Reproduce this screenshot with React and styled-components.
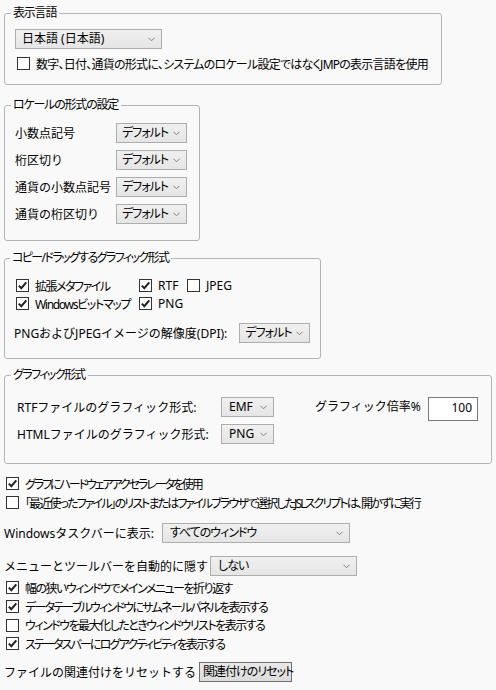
import React from "react";
import styled, { createGlobalStyle } from "styled-components";

const GlobalStyle = createGlobalStyle`
  html, body {
    margin: 0;
    padding: 0;
    background: #f9f9f9;
  }
  body {
    font-family: "Noto Sans", "Noto Sans CJK JP", sans-serif;
    font-size: 12px;
    color: #000;
  }
`;

// proportional (Meiryo UI like) text used by legends, checkboxes, combos, buttons
const Prop = styled.span`
  font-feature-settings: "palt";
  letter-spacing: ${(p) => (p.$ls != null ? p.$ls : -1.2)}px;
`;

const Page = styled.div`
  width: 496px;
  height: 690px;
  padding: 5px 0 0 4px;
  box-sizing: border-box;
  overflow: hidden;
`;

const Group = styled.fieldset`
  width: ${(p) => p.$w}px;
  box-sizing: border-box;
  margin: ${(p) => p.$mt || 0}px 0 0 0;
  padding: ${(p) => p.$pt}px 0 ${(p) => p.$pb}px ${(p) => p.$pl || 10}px;
  border: 1px solid #b4b4b4;
  border-radius: 3px;
  min-width: 0;
`;

const Legend = styled.legend`
  margin-left: -4px;
  padding: 0 3px 0 2px;
  height: 16px;
  line-height: 16px;
  font-size: 12px;
  font-feature-settings: "palt";
  letter-spacing: ${(p) => (p.$ls != null ? p.$ls : -1.2)}px;
`;

const Select = styled.div`
  display: flex;
  align-items: center;
  justify-content: space-between;
  width: ${(p) => p.$w}px;
  height: 20px;
  box-sizing: border-box;
  padding: 0 6px 0 ${(p) => (p.$pl != null ? p.$pl : 5)}px;
  border: 1px solid #adadad;
  background: linear-gradient(#f0f0f0, #e5e5e5);
  font-size: 12px;
  line-height: 18px;
  white-space: nowrap;
  flex-shrink: 0;
`;

const Chevron = () => (
  <svg width="7" height="5" viewBox="0 0 7 5">
    <path d="M0.5 0.8 L3.5 3.8 L6.5 0.8" fill="none" stroke="#808080" strokeWidth="1" />
  </svg>
);

const Dropdown = ({ children, w, pl, ls }) => (
  <Select $w={w} $pl={pl}>
    <Prop $ls={ls != null ? ls : -1}>{children}</Prop>
    <Chevron />
  </Select>
);

const Box = styled.span`
  display: inline-flex;
  align-items: center;
  justify-content: center;
  width: 13px;
  height: 13px;
  box-sizing: border-box;
  border: 1px solid #333;
  background: #fff;
  flex-shrink: 0;
`;

const CheckRow = styled.label`
  display: flex;
  align-items: center;
  gap: 6px;
  height: ${(p) => p.$h || 19}px;
  white-space: nowrap;
`;

const Check = ({ checked, children, h, ls }) => (
  <CheckRow $h={h}>
    <Box>
      {checked && (
        <svg width="11" height="11" viewBox="0 0 11 11">
          <path d="M1.8 5.6 L4.3 8.2 L9.3 2.4" fill="none" stroke="#222" strokeWidth="2" />
        </svg>
      )}
    </Box>
    <Prop $ls={ls}>{children}</Prop>
  </CheckRow>
);

const FirstSelectWrap = styled.div`
  margin-bottom: 7px;
`;

const CheckIndent = styled.div`
  padding-left: 2px;
`;

const LocaleGrid = styled.div`
  display: grid;
  grid-template-columns: 101px 71px;
  row-gap: 7px;
  align-items: center;
`;

const CopyGrid = styled.div`
  display: grid;
  grid-template-columns: 123px 48px auto;
  row-gap: 5px;
  padding-left: 2px;
`;

const Row = styled.div`
  display: flex;
  align-items: center;
  gap: ${(p) => p.$gap || 0}px;
  margin-top: ${(p) => p.$mt || 0}px;
  white-space: nowrap;
`;

const Label = styled.span`
  width: ${(p) => (p.$w ? `${p.$w}px` : "auto")};
  flex-shrink: 0;
`;

const GraphicLayout = styled.div`
  display: flex;
  padding-left: 2px;
`;

const GraphicCol = styled.div`
  display: flex;
  flex-direction: column;
  gap: 7px;
`;

const ScaleBox = styled.div`
  display: flex;
  align-items: flex-start;
  margin-left: 41px;
  gap: 6px;
`;

const ScaleLabel = styled.span`
  line-height: 20px;
  width: 107px;
`;

const NumberInput = styled.div`
  width: 50px;
  height: 24px;
  box-sizing: border-box;
  border: 1px solid #7a7a7a;
  background: #fff;
  text-align: right;
  padding: 1px 5px 0 0;
  line-height: 18px;
`;

const Loose = styled.div`
  margin-top: ${(p) => p.$mt || 0}px;
  padding-left: ${(p) => p.$pl || 0}px;
`;

const Button = styled.button`
  height: 20px;
  width: 93px;
  padding: 0 3px;
  font: inherit;
  font-size: 12px;
  line-height: 16px;
  color: #000;
  background: linear-gradient(#e8e8e8, #dcdcdc);
  border: 1px solid #707070;
  border-radius: 0;
  white-space: nowrap;
`;

export default function App() {
  return (
    <>
      <GlobalStyle />
      <Page>
        <Group $w={438} $pt={8} $pb={13}>
          <Legend>表示言語</Legend>
          <FirstSelectWrap>
            <Dropdown w={147} pl={6} ls={0}>日本語 (日本語)</Dropdown>
          </FirstSelectWrap>
          <CheckIndent>
            <Check h={15} ls={-0.75}>数字、日付、通貨の形式に、システムのロケール設定ではなくJMPの表示言語を使用</Check>
          </CheckIndent>
        </Group>

        <Group $w={196} $mt={12} $pt={10} $pb={16}>
          <Legend>ロケールの形式の設定</Legend>
          <LocaleGrid>
            <span>小数点記号</span>
            <Dropdown w={71}>デフォルト</Dropdown>
            <span>桁区切り</span>
            <Dropdown w={71}>デフォルト</Dropdown>
            <span>通貨の小数点記号</span>
            <Dropdown w={71}>デフォルト</Dropdown>
            <span>通貨の桁区切り</span>
            <Dropdown w={71}>デフォルト</Dropdown>
          </LocaleGrid>
        </Group>

        <Group $w={317} $mt={9} $pt={13} $pb={15} $pl={9}>
          <Legend $ls={-1.6}>コピー/ドラッグするグラフィック形式</Legend>
          <CopyGrid>
            <Check checked h={13} ls={-1.5}>拡張メタファイル</Check>
            <Check checked h={13} ls={0}>RTF</Check>
            <Check h={13} ls={0}>JPEG</Check>
            <Check checked h={13} ls={-1.3}>Windowsビットマップ</Check>
            <Check checked h={13} ls={0}>PNG</Check>
          </CopyGrid>
          <Row $mt={13} $gap={12}>
            <span>PNGおよびJPEGイメージの解像度(DPI):</span>
            <Dropdown w={71}>デフォルト</Dropdown>
          </Row>
        </Group>

        <Group $w={488} $mt={8} $pt={14} $pb={19}>
          <Legend $ls={-1.6}>グラフィック形式</Legend>
          <GraphicLayout>
            <GraphicCol>
              <Row>
                <Label $w={204}>RTFファイルのグラフィック形式:</Label>
                <Dropdown w={53} pl={7} ls={0}>EMF</Dropdown>
              </Row>
              <Row>
                <Label $w={204}>HTMLファイルのグラフィック形式:</Label>
                <Dropdown w={53} pl={7} ls={0}>PNG</Dropdown>
              </Row>
            </GraphicCol>
            <ScaleBox>
              <ScaleLabel>グラフィック倍率%</ScaleLabel>
              <NumberInput>100</NumberInput>
            </ScaleBox>
          </GraphicLayout>
        </Group>

        <Loose $mt={10} $pl={2}>
          <Check checked ls={-2.1}>グラフにハードウェアアクセラレータを使用</Check>
          <Check ls={-1.9}>「最近使ったファイル」のリストまたはファイルブラウザで選択したJSLスクリプトは、開かずに実行</Check>
        </Loose>

        <Row $mt={11} $gap={8}>
          <span>Windowsタスクバーに表示:</span>
          <Dropdown w={188} pl={7}>すべてのウィンドウ</Dropdown>
        </Row>

        <Row $mt={13} $gap={2}>
          <span>メニューとツールバーを自動的に隠す</span>
          <Dropdown w={147} pl={7}>しない</Dropdown>
        </Row>

        <Loose $mt={2} $pl={2}>
          <Check checked ls={-1.5}>幅の狭いウィンドウでメインメニューを折り返す</Check>
          <Check checked ls={-1.75}>データテーブルウィンドウにサムネールパネルを表示する</Check>
          <Check h={18} ls={-1.5}>ウィンドウを最大化したときウィンドウリストを表示する</Check>
          <Check checked ls={-1.85}>ステータスバーにログアクティビティを表示する</Check>
        </Loose>

        <Row $mt={9} $gap={3}>
          <span>ファイルの関連付けをリセットする</span>
          <Button>
            <Prop $ls={-1}>関連付けのリセット</Prop>
          </Button>
        </Row>
      </Page>
    </>
  );
}
